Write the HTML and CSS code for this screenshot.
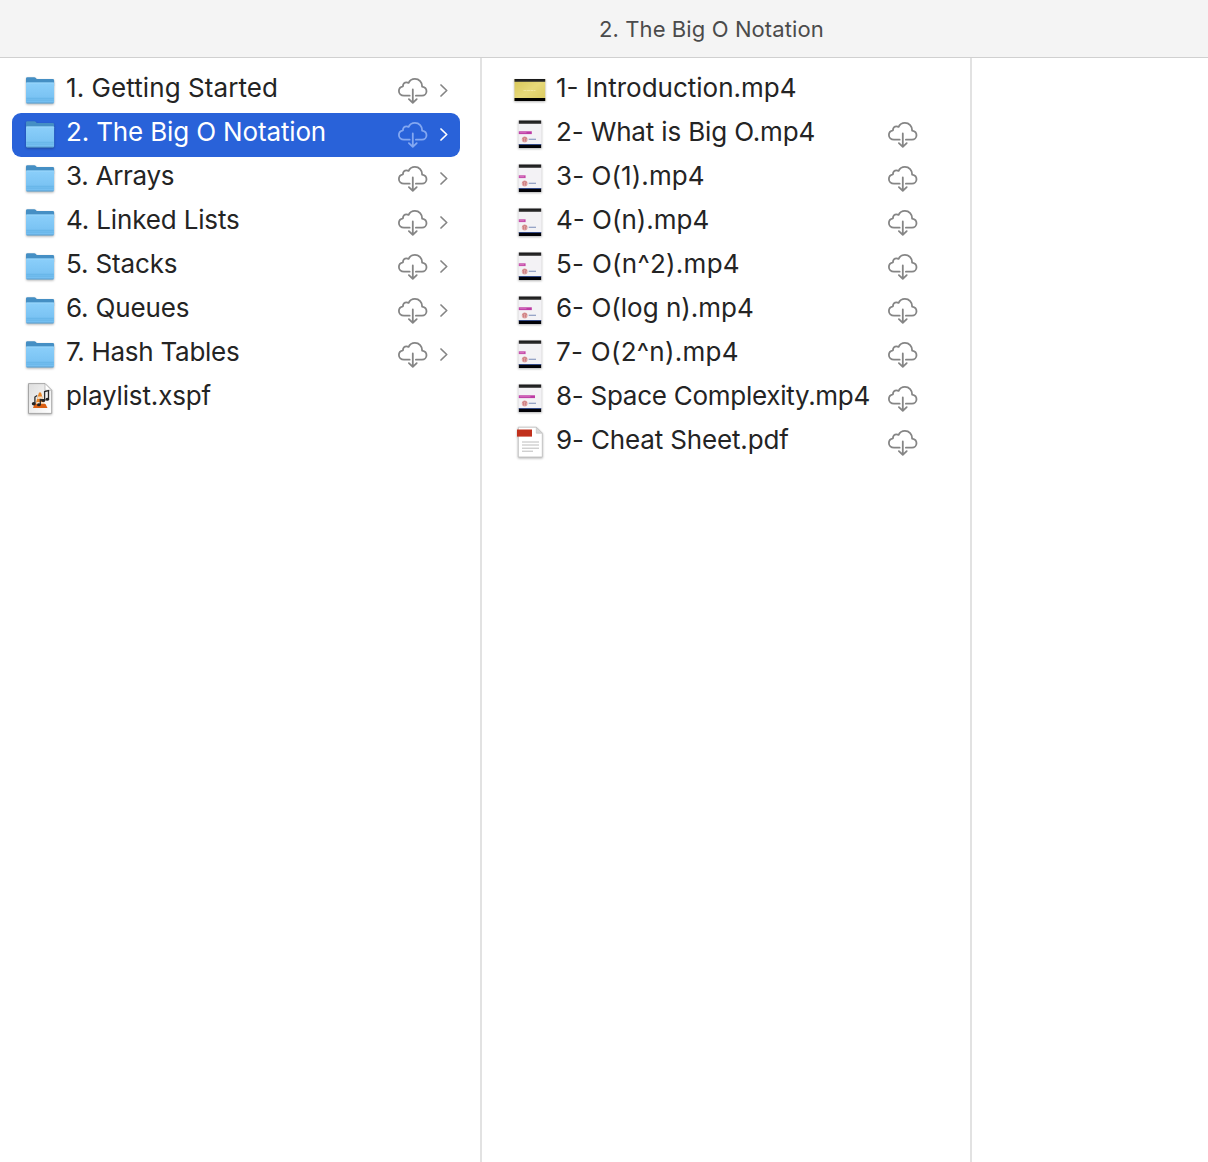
FILE: index.html
```html
<!DOCTYPE html>
<html lang="en">
<head>
<meta charset="utf-8">
<title>2. The Big O Notation</title>
<link rel="stylesheet" href="styles.css">
</head>
<body>
<svg class="defs" aria-hidden="true">
  <defs>
    <linearGradient id="folder-front" x1="0" y1="0" x2="0" y2="1"><stop offset="0" stop-color="#8bcffa"/><stop offset="1" stop-color="#73bef0"/></linearGradient>
    <linearGradient id="bar-top" x1="0" y1="0" x2="0" y2="1"><stop offset="0" stop-color="#151515"/><stop offset="1" stop-color="#333"/></linearGradient>
    <linearGradient id="yellow" x1="0" y1="0" x2="1" y2="1"><stop offset="0" stop-color="#d8c657"/><stop offset=".5" stop-color="#e7d979"/><stop offset="1" stop-color="#d9c95f"/></linearGradient>
    <linearGradient id="paper" x1="0" y1="0" x2="1" y2="1"><stop offset="0" stop-color="#dedede"/><stop offset="1" stop-color="#fff"/></linearGradient>
  </defs>
  <symbol id="folder" viewBox="0 0 32 32">
    <path d="M2 4.600Q2 3.200 3.400 3.200H10.300Q11.200 3.200 11.900 4L12.700 4.900H28.700Q30.100 4.900 30.100 6.300V12H2Z" fill="#458fc4"/>
    <path d="M2 9.300Q2 8.600 2.800 8.600H29.300Q30.100 8.600 30.100 9.300V28Q30.100 29.300 28.800 29.300H3.300Q2 29.300 2 28Z" fill="url(#folder-front)"/>
    <path d="M2.300 9H29.800" stroke="#a0dafc" stroke-width=".7"/>
    <path d="M2.300 24.300H29.800M2.300 26.100H29.800" stroke="#5eafe3" stroke-width=".7"/>
    <path d="M2.600 29H29.500" stroke="#5c9dcb" stroke-width=".9"/>
  </symbol>
  <symbol id="cloud" viewBox="0 0 30 26">
    <path d="M11.700 17.700H6C3 17.700.9 15.700.9 13C.9 10.500 2.600 8.700 5 8.300C4.800 5.700 6.500 4.300 8.500 4.300C9.300 4.300 10 4.500 10.600 4.900C11.700 2.500 14 .9 16.900 .9C21.100.9 24.300 4.100 24.100 8.700C27 9.200 28.500 11.100 28.500 13.300C28.500 15.800 26.500 17.700 24 17.700H17.900M14.800 11.400V24.700M10.900 21.100L14.800 24.900L18.700 21.100" fill="none" stroke="currentColor" stroke-width="1.800" stroke-linecap="round" stroke-linejoin="round"/>
  </symbol>
  <symbol id="chevron" viewBox="0 0 8 13">
    <path d="M1 1L6.700 6.500L1 12" fill="none" stroke="currentColor" stroke-width="1.700" stroke-linecap="round" stroke-linejoin="round"/>
  </symbol>
  <symbol id="video-wide" viewBox="0 0 32 32">
    <path d="M.5 5H31.200V27H.5Z" fill="url(#yellow)"/>
    <path d="M.5 5H31.200V7.800H.5Z" fill="url(#bar-top)"/>
    <path d="M.5 24H31.200V27H.5Z" fill="#000"/>
    <path d="M9.500 16.500H21.500" stroke="#f1e79f" stroke-width="1" stroke-dasharray="3 .5"/>
  </symbol>
  <symbol id="video-base" viewBox="0 0 32 32">
    <path d="M4.400 2.500H27.600V30H4.400Z" fill="#f3f2f5"/>
    <path d="M4.800 2.500H27.200V5.800H4.800Z" fill="url(#bar-top)"/>
    <path d="M4.800 26.500H27.200V30H4.800Z" fill="#020207"/>
    <path d="M4.800 26.500H27.200" stroke="#24408b" stroke-width=".8"/>
    <circle cx="10.700" cy="21.500" r="2.900" fill="#e1a9a9"/>
    <path d="M8.500 20.500Q10.700 18.200 12.900 20.500M9.700 20.500V23.500M11.700 20.500V23.500" fill="none" stroke="#c56c72" stroke-width=".8"/>
    <path d="M14.700 21.300H22" stroke="#8e9cc2" stroke-width="1.200"/>
  </symbol>
  <symbol id="video-short" viewBox="0 0 32 32">
    <use href="#video-base"/><path d="M4.800 13.300H11.600V16.100H4.800Z" fill="#c54ba9"/><path d="M5.500 14.700H10" stroke="#e597d2" stroke-width=".6"/>
  </symbol>
  <symbol id="video-long" viewBox="0 0 32 32">
    <use href="#video-base"/><path d="M4.800 13.300H17.800V16.100H4.800Z" fill="#bd3ba4"/><path d="M5.500 14.700H12.500" stroke="#df83ca" stroke-width=".7"/>
  </symbol>
  <symbol id="video-full" viewBox="0 0 32 32">
    <use href="#video-base"/><path d="M4.800 13.300H21V16.100H4.800Z" fill="#bd3ba4"/><path d="M5.500 14.700H16.500" stroke="#df83ca" stroke-width=".7"/>
  </symbol>
  <symbol id="pdf" viewBox="0 0 32 32">
    <path d="M4.300 1.200H22.300L28.300 7.200V31H4.300Z" fill="#fff" stroke="#c2c2c2" stroke-width=".9"/>
    <path d="M22.300 1.200V7.200H28.300Z" fill="#d8d8d8" stroke="#c2c2c2" stroke-width=".7"/>
    <path d="M3 3.500H18V10.600H3Z" fill="#c1301c"/>
    <path d="M8 16H25M8 19H25M8 22.200H25M8 25.200H19" stroke="#bcbcbc" stroke-width="1"/>
  </symbol>
  <symbol id="playlist" viewBox="0 0 32 32">
    <path d="M4.500 1.600H21L27.700 8.300V31.400H4.500Z" fill="url(#paper)" stroke="#989898" stroke-width=".8"/>
    <path d="M21 1.600V8.300H27.700Z" fill="#fff" stroke="#aaa" stroke-width=".7"/>
    <path d="M15 10.500H17L20.500 22H11.500Z" fill="#e88425"/>
    <path d="M10.500 22H21.500L23.500 26H9Z" fill="#d95e12"/>
    <path d="M14 14.500H18.200L19 17H13.200ZM12.500 20H19.700L20.200 21.700H12Z" fill="#f5ddc4"/>
    <path d="M10.900 21.500V15L13.200 13.500M20.600 18.500V9.500L24.500 8.500V17M16.300 23V17.500L20.700 18" fill="none" stroke="#2c2c2c" stroke-width="1.300"/>
    <ellipse cx="9.800" cy="21.700" rx="2" ry="1.700" fill="#242424"/><ellipse cx="14.900" cy="22.800" rx="1.900" ry="1.500" fill="#242424"/><ellipse cx="19.300" cy="18.500" rx="2" ry="1.600" fill="#242424"/><ellipse cx="23.300" cy="17.200" rx="1.800" ry="1.500" fill="#242424"/>
  </symbol>
</svg>
<header class="titlebar"><h1 class="title">2. The Big O Notation</h1></header>
<main class="browser">
  <ul class="column folders">
    <li class="row"><svg class="icon"><use href="#folder"/></svg><span class="name open">1. Getting Started</span><svg class="cloud"><use href="#cloud"/></svg><svg class="chevron"><use href="#chevron"/></svg></li>
    <li class="row selected"><svg class="icon"><use href="#folder"/></svg><span class="name snug">2. The Big O Notation</span><svg class="cloud"><use href="#cloud"/></svg><svg class="chevron"><use href="#chevron"/></svg></li>
    <li class="row"><svg class="icon"><use href="#folder"/></svg><span class="name tight">3. Arrays</span><svg class="cloud"><use href="#cloud"/></svg><svg class="chevron"><use href="#chevron"/></svg></li>
    <li class="row"><svg class="icon"><use href="#folder"/></svg><span class="name snug">4. Linked Lists</span><svg class="cloud"><use href="#cloud"/></svg><svg class="chevron"><use href="#chevron"/></svg></li>
    <li class="row"><svg class="icon"><use href="#folder"/></svg><span class="name snug">5. Stacks</span><svg class="cloud"><use href="#cloud"/></svg><svg class="chevron"><use href="#chevron"/></svg></li>
    <li class="row"><svg class="icon"><use href="#folder"/></svg><span class="name snug">6. Queues</span><svg class="cloud"><use href="#cloud"/></svg><svg class="chevron"><use href="#chevron"/></svg></li>
    <li class="row"><svg class="icon"><use href="#folder"/></svg><span class="name tight">7. Hash Tables</span><svg class="cloud"><use href="#cloud"/></svg><svg class="chevron"><use href="#chevron"/></svg></li>
    <li class="row"><svg class="icon"><use href="#playlist"/></svg><span class="name snug">playlist.xspf</span></li>
  </ul>
  <ul class="column files">
    <li class="row"><svg class="icon"><use href="#video-wide"/></svg><span class="name">1- Introduction.mp4</span></li>
    <li class="row"><svg class="icon"><use href="#video-long"/></svg><span class="name snug">2- What is Big O.mp4</span><svg class="cloud"><use href="#cloud"/></svg></li>
    <li class="row"><svg class="icon"><use href="#video-short"/></svg><span class="name open">3- O(1).mp4</span><svg class="cloud"><use href="#cloud"/></svg></li>
    <li class="row"><svg class="icon"><use href="#video-short"/></svg><span class="name">4- O(n).mp4</span><svg class="cloud"><use href="#cloud"/></svg></li>
    <li class="row"><svg class="icon"><use href="#video-short"/></svg><span class="name loose">5- O(n^2).mp4</span><svg class="cloud"><use href="#cloud"/></svg></li>
    <li class="row"><svg class="icon"><use href="#video-long"/></svg><span class="name">6- O(log n).mp4</span><svg class="cloud"><use href="#cloud"/></svg></li>
    <li class="row"><svg class="icon"><use href="#video-short"/></svg><span class="name loose">7- O(2^n).mp4</span><svg class="cloud"><use href="#cloud"/></svg></li>
    <li class="row"><svg class="icon"><use href="#video-full"/></svg><span class="name tight">8- Space Complexity.mp4</span><svg class="cloud"><use href="#cloud"/></svg></li>
    <li class="row"><svg class="icon"><use href="#pdf"/></svg><span class="name snug">9- Cheat Sheet.pdf</span><svg class="cloud"><use href="#cloud"/></svg></li>
  </ul>
  <div class="column preview"></div>
</main>
</body>
</html>
```
FILE: styles.css
```css
* { box-sizing: border-box; }
body { margin: 0; height: 1162px; overflow: hidden; display: flex; flex-direction: column; background: #fff; color: #242424; font-family: Inter, "Liberation Sans", sans-serif; }
.defs { position: absolute; width: 0; height: 0; }
.titlebar { flex: 0 0 58px; background: #f4f4f4; border-bottom: 1px solid #d0d0d0; padding: 14px 0 0 599px; }
.title { margin: 0; font-size: 22px; line-height: 30px; font-weight: 400; color: #4b4b4b; letter-spacing: .1px; white-space: nowrap; }
.browser { flex: 1; display: grid; grid-template-columns: 482px 490px 1fr; }
.column { list-style: none; margin: 0; padding: 11px 20px 0 12px; border-right: 2px solid #e2e2e2; }
.files { padding: 11px 52px 0 20px; }
.preview { border: 0; }
.row { height: 44px; display: flex; align-items: center; padding: 0 12px; border-radius: 9px; }
.selected { background: #2962d9; color: #fff; }
.icon { flex: none; width: 32px; height: 32px; margin-bottom: 2px; filter: drop-shadow(0 1px 1px rgba(0, 0, 0, .3)); }
.name { flex: 1; margin-left: 10px; font-size: 26px; line-height: 36px; padding-bottom: 6px; white-space: nowrap; }
.open { letter-spacing: .08px; }
.loose { letter-spacing: .27px; }
.snug { letter-spacing: -.15px; }
.tight { letter-spacing: -.27px; }
.cloud { flex: none; width: 30px; height: 26px; margin-bottom: 1px; color: #858585; }
.selected .cloud { color: #84a8f1; }
.chevron { flex: none; width: 8px; height: 13px; margin: 0 0 2px 12px; color: #858585; }
.selected .chevron { color: #fff; }
.files .row { padding: 0 0 0 12px; }
```
